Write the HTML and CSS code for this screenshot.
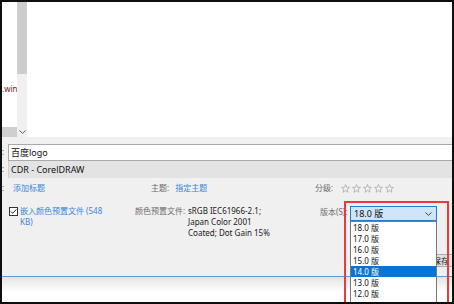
FILE: index.html
```
<!DOCTYPE html>
<html lang="zh-CN">
<head>
    <meta charset="UTF-8">
    <title>CorelDRAW 另存为</title>
    <link rel="stylesheet" href="styles.css">
</head>
<body>
    <div class="screen">
        <div class="browser">
            <div class="left-pane">
                <div class="file-list"><span class="file-name">.win</span></div>
                <div class="hscroll"></div>
            </div>
            <div class="vscroll">
                <div class="vthumb"></div>
                <div class="scroll-arrow">
                    <svg width="7" height="4" viewBox="0 0 7 4"><path d="M0.5 0.5 L3.5 3.3 L6.5 0.5" fill="none" stroke="#606060" stroke-width="1"/></svg>
                </div>
            </div>
            <div class="preview"></div>
        </div>

        <div class="details">
            <div class="field-row">
                <span class="cut-label">:</span>
                <div class="text-field">百度logo</div>
            </div>
            <div class="field-row">
                <span class="cut-label">:</span>
                <div class="text-field readonly">CDR - CorelDRAW</div>
            </div>

            <div class="meta-row">
                <div class="meta-cell title-cell">
                    <span class="cut-label">:</span>
                    <span class="link">添加标题</span>
                </div>
                <div class="meta-cell subject-cell">
                    <span class="label">主题:</span>
                    <span class="link">指定主题</span>
                </div>
                <div class="meta-cell rating-cell">
                    <span class="label">分级:</span>
                    <div class="stars">
                        <svg class="star" viewBox="0 0 10 10"><polygon points="5,0.6 6.2,3.6 9.4,3.8 6.9,5.8 7.7,9.2 5,7.3 2.3,9.2 3.1,5.8 0.6,3.8 3.8,3.6"/></svg>
                        <svg class="star" viewBox="0 0 10 10"><polygon points="5,0.6 6.2,3.6 9.4,3.8 6.9,5.8 7.7,9.2 5,7.3 2.3,9.2 3.1,5.8 0.6,3.8 3.8,3.6"/></svg>
                        <svg class="star" viewBox="0 0 10 10"><polygon points="5,0.6 6.2,3.6 9.4,3.8 6.9,5.8 7.7,9.2 5,7.3 2.3,9.2 3.1,5.8 0.6,3.8 3.8,3.6"/></svg>
                        <svg class="star" viewBox="0 0 10 10"><polygon points="5,0.6 6.2,3.6 9.4,3.8 6.9,5.8 7.7,9.2 5,7.3 2.3,9.2 3.1,5.8 0.6,3.8 3.8,3.6"/></svg>
                        <svg class="star" viewBox="0 0 10 10"><polygon points="5,0.6 6.2,3.6 9.4,3.8 6.9,5.8 7.7,9.2 5,7.3 2.3,9.2 3.1,5.8 0.6,3.8 3.8,3.6"/></svg>
                    </div>
                </div>
            </div>

            <div class="meta-row profile-row">
                <div class="meta-cell embed-cell">
                    <svg class="checkbox" width="9" height="9" viewBox="0 0 9 9">
                        <rect x="0.5" y="0.5" width="8" height="8" fill="#fff" stroke="#333"/>
                        <path d="M1.8 4.4 L3.7 6.3 L7.3 2.4" fill="none" stroke="#222" stroke-width="1"/>
                    </svg>
                    <span class="link embed-text">嵌入颜色预置文件 (548 KB)</span>
                </div>
                <div class="meta-cell profile-cell">
                    <span class="label profile-label">颜色预置文件:</span>
                    <div class="profile-value">sRGB IEC61966-2.1;<br>Japan Color 2001<br>Coated; Dot Gain 15%</div>
                </div>
                <div class="meta-cell version-cell">
                    <span class="label version-label">版本(S):</span>
                    <div class="version-select">
                        <div class="select-box">
                            <span>18.0 版</span>
                            <svg width="7" height="4" viewBox="0 0 7 4"><path d="M0.5 0.5 L3.5 3.3 L6.5 0.5" fill="none" stroke="#444" stroke-width="1"/></svg>
                        </div>
                        <ul class="version-list">
                            <li>18.0 版</li>
                            <li>17.0 版</li>
                            <li>16.0 版</li>
                            <li>15.0 版</li>
                            <li class="selected">14.0 版</li>
                            <li>13.0 版</li>
                            <li>12.0 版</li>
                        </ul>
                        <div class="highlight-box"></div>
                    </div>
                </div>
            </div>

            <div class="actions">
                <button class="save-btn">保存</button>
            </div>
        </div>

        <div class="bottom-strip"></div>
    </div>
</body>
</html>
```

FILE: styles.css
```
body {
    margin: 0;
    width: 454px;
    height: 304px;
    overflow: hidden;
    background: #0e0e0e;
    font-family: "Noto Sans", "Noto Sans CJK SC", sans-serif;
}
.screen {
    margin: 2px;
    width: 450px;
    height: 300px;
    background: #fff;
    display: flex;
    flex-direction: column;
    overflow: hidden;
}

/* file browser area */
.browser {
    height: 135px;
    display: flex;
    flex-shrink: 0;
}
.left-pane {
    width: 15px;
    display: flex;
    flex-direction: column;
    overflow: hidden;
}
.file-list {
    flex: 1;
    padding-top: 82px;
}
.file-name {
    display: block;
    font-size: 8px;
    line-height: 10px;
    color: #6b2626;
    white-space: nowrap;
}
.hscroll {
    height: 10px;
    background: #cfcfcf;
}
.vscroll {
    width: 10px;
    background: #f0f0f0;
    display: flex;
    flex-direction: column;
}
.vthumb {
    height: 72px;
    background: #cdcdcd;
}
.scroll-arrow {
    margin-top: auto;
    height: 10px;
    display: flex;
    align-items: center;
    justify-content: center;
}
.preview {
    flex: 1;
    background: #fff;
}

/* details pane */
.details {
    height: 140px;
    flex-shrink: 0;
    box-sizing: border-box;
    background: #f0f0f0;
    border-bottom: 1px solid #5f9bd3;
    padding-top: 7px;
}
.field-row {
    display: flex;
    font-size: 9px;
    color: #111;
}
.cut-label {
    width: 6px;
    color: #555;
    font-size: 8px;
    line-height: 15px;
}
.text-field {
    flex: 1;
    height: 15px;
    line-height: 15px;
    padding-left: 2px;
    background: #fff;
    border: 1px solid #a9a9a9;
    border-right: none;
    border-bottom: none;
}
.field-row:first-child .text-field {
    border-bottom: 1px solid #a9a9a9;
}
.text-field.readonly {
    height: 17px;
    line-height: 17px;
    background: #e3e3e3;
    border: none;
    border-left: 1px solid #cfcfcf;
}

.meta-row {
    display: flex;
    font-size: 8px;
    line-height: 12px;
    margin-top: 4px;
}
.meta-cell {
    display: flex;
    align-items: flex-start;
}
.title-cell {
    width: 149px;
}
.title-cell .cut-label {
    width: 11px;
    line-height: 12px;
}
.subject-cell {
    width: 164px;
    gap: 6px;
}
.rating-cell {
    gap: 8px;
}
.label {
    color: #6d6d6d;
}
.link {
    color: #3a86dc;
}
.stars {
    display: flex;
    gap: 2px;
    padding-top: 2px;
}
.star {
    width: 9px;
    height: 9px;
    fill: none;
    stroke: #a3a3a3;
    stroke-width: 0.8;
}

.profile-row {
    margin-top: 11px;
    line-height: 11px;
}
.embed-cell {
    width: 126px;
    padding-left: 7px;
    gap: 2px;
}
.checkbox {
    margin-top: 2px;
    flex-shrink: 0;
}
.embed-text {
    width: 88px;
}
.profile-cell {
    width: 185px;
}
.profile-label {
    width: 53px;
}
.profile-value {
    color: #1a1a1a;
}
.version-cell {
    gap: 4px;
}
.version-label {
    width: 26px;
    padding-top: 1px;
    white-space: nowrap;
}
.version-select {
    position: relative;
    margin-top: 1px;
}
.select-box {
    width: 87px;
    height: 15px;
    box-sizing: border-box;
    border: 1px solid #1a7fd6;
    background: #cde6fb;
    display: flex;
    align-items: center;
    justify-content: space-between;
    padding: 0 4px 0 3px;
    font-size: 9px;
    color: #111;
}
.version-list {
    position: absolute;
    top: 15px;
    left: 0;
    width: 87px;
    height: 100px;
    box-sizing: border-box;
    margin: 0;
    padding: 0;
    list-style: none;
    background: #fff;
    border: 1px solid #7a7a7a;
    z-index: 5;
}
.version-list li {
    height: 11px;
    line-height: 11px;
    padding-left: 2px;
    font-size: 8px;
    color: #111;
}
.version-list li.selected {
    background: #0a74d6;
    color: #fff;
}
.highlight-box {
    position: absolute;
    left: -6px;
    top: -5px;
    width: 105px;
    height: 120px;
    box-sizing: border-box;
    border: 2px solid #f03838;
    z-index: 6;
}

.actions {
    display: flex;
    justify-content: flex-end;
    margin-top: 16px;
    margin-right: -9px;
}
.save-btn {
    width: 40px;
    height: 13px;
    padding: 0;
    font-family: inherit;
    font-size: 8px;
    line-height: 11px;
    color: #111;
    background: #e1e1e1;
    border: 1px solid #adadad;
}

.bottom-strip {
    flex: 1;
    background: linear-gradient(#e4e4e4, #fff 60%);
}
```
